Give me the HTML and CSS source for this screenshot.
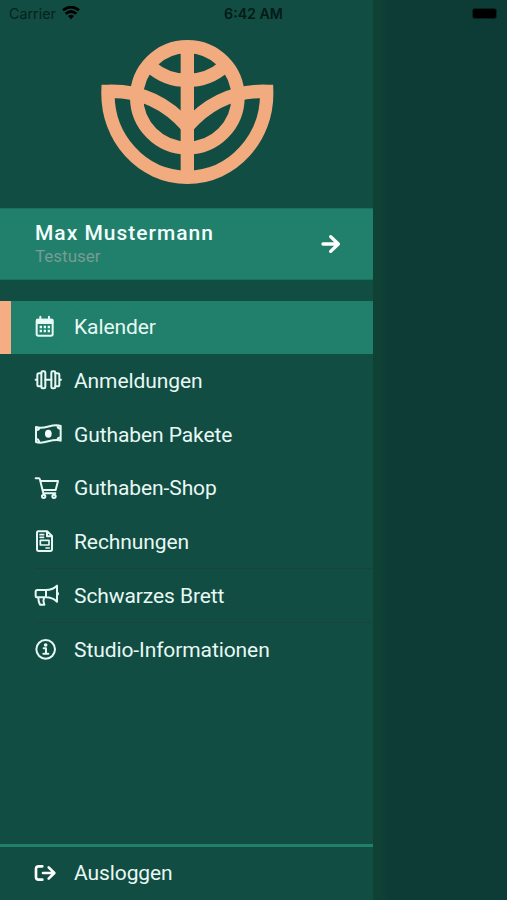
FILE: index.html
```html
<!DOCTYPE html>
<html lang="de">
<head>
<meta charset="utf-8">
<title>Menü</title>
<link rel="stylesheet" href="styles.css">
</head>
<body>
<div class="screen">
  <aside class="drawer">
    <div class="brand">
      <svg class="logo" viewBox="0 0 582 492">
        <circle cx="292" cy="202" r="152"/>
        <path d="M292 50V440M182 110Q228 151 292 151Q356 151 402 110"/>
        <path d="M292 290C240 230 165 181 54 184C50 322 155 442 292 442C429 442 534 322 530 184C419 181 344 230 292 290"/>
      </svg>
    </div>
    <a class="profile">
      <span class="who"><strong class="name">Max Mustermann</strong><span class="role">Testuser</span></span>
      <svg class="arrow" viewBox="0 0 60 60"><path d="M6 30H52M29 8L52 30L29 52"/></svg>
    </a>
    <nav class="menu">
      <a class="item active">
        <svg class="icon" viewBox="0 0 84 72"><rect x="8" y="14" width="48" height="48" rx="5"/><path class="solid" d="M9 14H55V24H9z"/><path d="M19 5V14M45 5V14"/><path class="dots" d="M17 36H48M17 48H48"/></svg>
        <span class="label">Kalender</span></a>
      <a class="item">
        <svg class="icon" viewBox="0 0 84 72"><rect x="22" y="7" width="12" height="51" rx="4"/><rect x="52" y="7" width="12" height="51" rx="4"/><path d="M22 13H15Q10 13 10 18V47Q10 52 15 52H22M64 13H71Q76 13 76 18V47Q76 52 71 52H64M34 32H52M5 32H10M76 32H81"/></svg>
        <span class="label">Anmeldungen</span></a>
      <a class="item">
        <svg class="icon" viewBox="0 0 84 72"><path d="M6 12C31 23 55-1 80 9V53C55 43 31 67 6 57zM6 21Q14 22 16 16M70 8Q71 17 80 18M6 47Q14 48 16 58M70 51Q71 44 80 43"/><ellipse class="solid dot" cx="43" cy="32" rx="10" ry="12"/></svg>
        <span class="label">Guthaben Pakete</span></a>
      <a class="item">
        <svg class="icon" viewBox="0 0 84 72"><path d="M5 4H14Q17 4 18 8L28 49H64M20 12H72L65 39H26"/><circle cx="29" cy="58" r="5"/><circle cx="60" cy="58" r="5"/></svg>
        <span class="label">Guthaben-Shop</span></a>
      <a class="item">
        <svg class="icon" viewBox="0 0 84 72"><path d="M13 4H40L54 18V58Q54 63 49 63H14Q9 63 9 58V9Q9 4 13 4zM39 5V19H53"/><path class="thin" d="M18 14H29M18 22H29M36 54H46"/><rect class="thin" x="19" y="31" width="26" height="14"/></svg>
        <span class="label">Rechnungen</span></a>
      <a class="item ruled">
        <svg class="icon" viewBox="0 0 84 72"><path d="M36 18H10Q5 18 5 23V35Q5 40 10 40H36M36 18V40M36 18Q55 18 69 5V53Q55 40 36 40M13 41Q13 52 18 62H31Q26 52 30 41M70 25Q74 29 70 33"/></svg>
        <span class="label">Schwarzes Brett</span></a>
      <a class="item ruled">
        <svg class="icon" viewBox="0 0 84 72"><circle cx="35" cy="34" r="28"/><circle class="solid dot" cx="35" cy="21" r="5.5"/><path d="M29 31H36V47M28 47H43"/></svg>
        <span class="label">Studio-Informationen</span></a>
    </nav>
    <a class="logout">
      <svg class="icon heavy" viewBox="0 0 84 72"><path d="M25 13H14Q6 13 6 21V45Q6 53 14 53H25M27 33H60M44 16L61 33L44 50"/></svg>
      <span class="label">Ausloggen</span>
    </a>
  </aside>
  <header class="status">
    <span class="carrier">Carrier
      <svg class="wifi" viewBox="0 0 54 42"><path d="M3 13Q27-7 51 13M11 23Q27 10 43 23"/><path class="fan" d="M18 30Q27 22 36 30L27 40z"/></svg>
    </span>
    <span class="time">6:42 AM</span>
    <span class="battery"></span>
  </header>
</div>
</body>
</html>
```
FILE: styles.css
```css
* { box-sizing: border-box; }
body { margin: 0; font-family: Roboto, sans-serif; background: #0d3c36; }
.screen { position: relative; width: 507px; height: 900px; overflow: hidden; background: linear-gradient(90deg, #0f4234 372px, #0f4234 380px, #0d3c36 388px); }
.status {
  position: absolute; top: 0; left: 0; width: 100%; height: 27px;
  display: grid; grid-template-columns: 1fr auto 1fr; align-items: center;
  padding: 0 9px; color: #06221d; font: 14.3px Inter, sans-serif;
}
.carrier { display: flex; align-items: center; gap: 6px; }
.wifi { width: 18px; height: 14px; margin-top: -1px; fill: none; stroke: #000; stroke-width: 8; }
.wifi .fan { fill: #000; stroke: none; }
.time { font-weight: 600; font-size: 14.2px; color: #041a16; }
.battery { justify-self: end; width: 25px; height: 11px; margin-right: 1px; border-radius: 3px; background: #000; border: 1px solid #06251f; }
.drawer { display: flex; flex-direction: column; width: 373px; height: 900px; background: #114d42; }
.brand { height: 208px; padding: 30px 0 0 90px; }
.logo { display: block; width: 194px; height: 164px; fill: none; stroke: #f2ab7f; stroke-width: 40; }
.profile { display: flex; align-items: center; justify-content: space-between; height: 72px; padding: 0 32px 0 35px; background: #21806c; border: 1px solid #1c705f; border-width: 1px 0; }
.who { display: flex; flex-direction: column; }
.name { font-size: 21px; line-height: 25px; font-weight: 500; letter-spacing: 1px; color: #f2fffc; }
.role { font-size: 17px; line-height: 21px; color: #789b93; }
.arrow { width: 20px; height: 20px; margin-top: -1px; fill: none; stroke: #fff; stroke-width: 10; stroke-linecap: round; stroke-linejoin: round; }
.menu { display: flex; flex-direction: column; margin-top: 20.6px; }
.item { position: relative; display: flex; align-items: center; height: 53.75px; padding-left: 34px; }
.item.active { background: #21806c; border-left: 11px solid #f5ae83; padding-left: 23px; }
.item.ruled::before { content: ""; position: absolute; top: -1px; left: 35px; right: 0; height: 1px; background: #1b433c; }
.icon { width: 28px; height: 24px; flex: none; overflow: visible; fill: none; stroke: #e6f8f3; stroke-width: 6; stroke-linejoin: round; stroke-linecap: round; }
.icon .solid { fill: #f2fffc; }
.icon .dot { stroke: none; }
.icon .dots { stroke-width: 7; stroke-dasharray: 7 5; stroke-linecap: butt; }
.icon .thin { stroke-width: 5; }
.icon.heavy { stroke-width: 8; stroke: #fff; }
.label { margin: -.6px 0 0 12px; font-size: 21px; line-height: 26px; letter-spacing: -.09px; color: #e8f8f4; white-space: nowrap; }
.logout { display: flex; align-items: center; height: 56px; margin-top: auto; padding-left: 34px; border-top: 3px solid #21806c; }
```
